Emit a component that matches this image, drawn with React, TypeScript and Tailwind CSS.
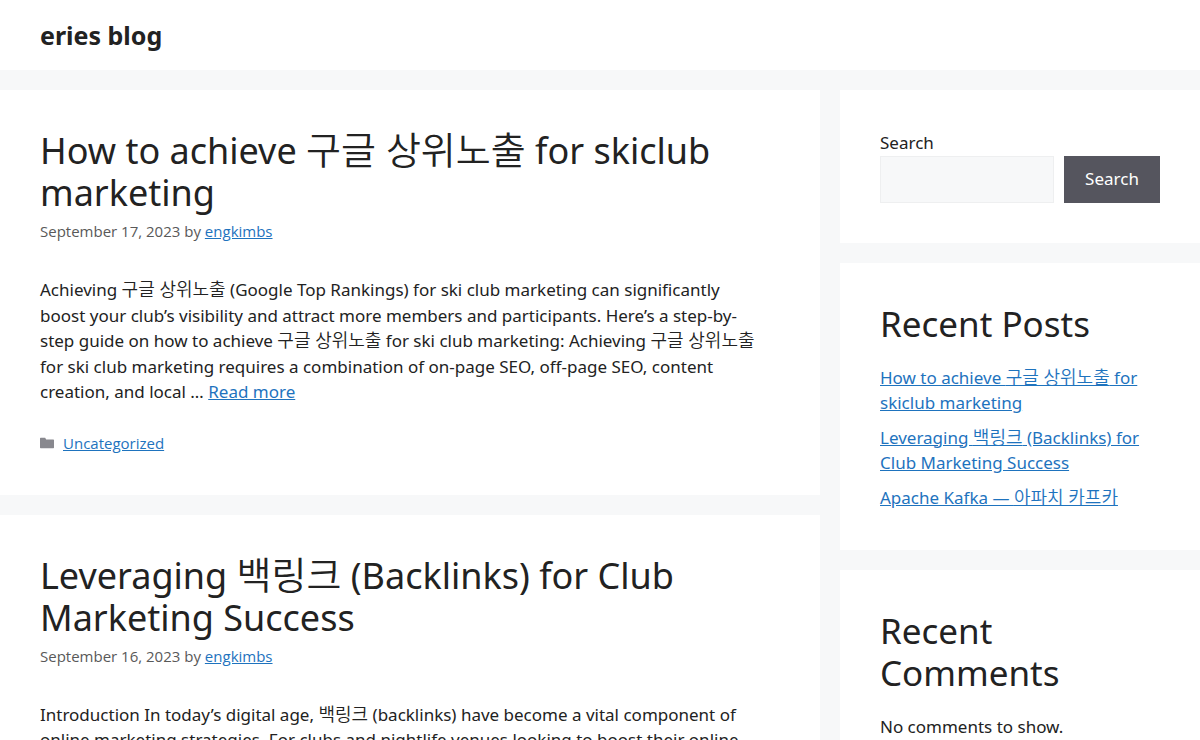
import React from 'react';

const posts = [
  {
    title: 'How to achieve 구글 상위노출 for skiclub marketing',
    date: 'September 17, 2023',
    author: 'engkimbs',
    excerpt:
      'Achieving 구글 상위노출 (Google Top Rankings) for ski club marketing can significantly boost your club’s visibility and attract more members and participants. Here’s a step-by-step guide on how to achieve 구글 상위노출 for ski club marketing: Achieving 구글 상위노출 for ski club marketing requires a combination of on-page SEO, off-page SEO, content creation, and local …',
    category: 'Uncategorized',
  },
  {
    title: 'Leveraging 백링크 (Backlinks) for Club Marketing Success',
    date: 'September 16, 2023',
    author: 'engkimbs',
    excerpt:
      'Introduction In today’s digital age, 백링크 (backlinks) have become a vital component of online marketing strategies. For clubs and nightlife venues looking to boost their online …',
    category: 'Uncategorized',
  },
];

const recentPosts = [
  'How to achieve 구글 상위노출 for skiclub marketing',
  'Leveraging 백링크 (Backlinks) for Club Marketing Success',
  'Apache Kafka — 아파치 카프카',
];

const link = 'text-[#1e73be] underline hover:text-black';
const meta = "font-['Open_Sans',sans-serif] text-[15px] leading-5";

// Hangul runs a little larger and lighter than the Latin text around it
const Mixed: React.FC<{ text: string; size?: string }> = ({ text, size = 'text-[18px]' }) => (
  <>
    {text.split(/([가-힣]+(?: [가-힣]+)*)/).map((part, i) =>
      i % 2 ? <span key={i} lang="ko" className={`${size} font-[350] leading-none`}>{part}</span> : part
    )}
  </>
);

const FolderIcon = () => (
  <svg viewBox="0 0 512 512" className="w-[14px] h-[14px] fill-[#88888e]" aria-hidden="true">
    <path d="M0 88q0-24 24-24H190L224 128H488q24 0 24 24V424q0 24-24 24H24q-24 0-24-24z" />
  </svg>
);

const Post: React.FC<{ post: (typeof posts)[number] }> = ({ post }) => (
  <article className="bg-white px-10 pt-10 pb-[42px]">
    <header>
      <h2 className="text-[36px] leading-[42px]"><Mixed text={post.title} size="text-[38px]" /></h2>
      <div className={`mt-[7px] text-[#595959] ${meta}`}>
        {post.date} by <a href="#" className={link}>{post.author}</a>
      </div>
    </header>
    <p className="mt-9 pr-4">
      <Mixed text={post.excerpt} /> <a href="#" className={link}>Read more</a>
    </p>
    <footer className={`mt-7 flex items-center gap-[9px] ${meta}`}>
      <FolderIcon />
      <a href="#" className={link}>{post.category}</a>
    </footer>
  </article>
);

const Widget: React.FC<{ title?: string; children: React.ReactNode }> = ({ title, children }) => (
  <section className="bg-white p-10">
    {title && <h2 className="mb-5 text-[35px] leading-[42px]">{title}</h2>}
    {children}
  </section>
);

export default function App() {
  return (
    <div className="min-h-screen bg-[#f7f8f9] font-['Noto_Sans','Noto_Sans_CJK_KR',sans-serif] text-[17px] leading-normal text-[#222222]">
      <header className="bg-white px-10 py-5">
        <a href="#" className="block text-[25px] leading-[30px] font-bold">eries blog</a>
      </header>
      <div className="flex items-start gap-5 py-5">
        <main className="flex min-w-0 flex-1 flex-col gap-5">
          {posts.map((post) => (
            <Post key={post.title} post={post} />
          ))}
        </main>
        <aside className="flex w-[30%] flex-col gap-5">
          <Widget>
            <form>
              <label htmlFor="search" className="block">Search</label>
              <div className="flex gap-[10px]">
                <input id="search" type="search" className="h-[47px] min-w-0 flex-1 border border-[#eeeff0] bg-[#f7f8f9] px-2" />
                <button type="button" className="w-24 bg-[#55555e] text-white">Search</button>
              </div>
            </form>
          </Widget>
          <Widget title="Recent Posts">
            <ul className="flex flex-col gap-[9px]">
              {recentPosts.map((title) => (
                <li key={title}>
                  <a href="#" className={link}><Mixed text={title} /></a>
                </li>
              ))}
            </ul>
          </Widget>
          <Widget title="Recent Comments">
            <p>No comments to show.</p>
          </Widget>
        </aside>
      </div>
    </div>
  );
}
